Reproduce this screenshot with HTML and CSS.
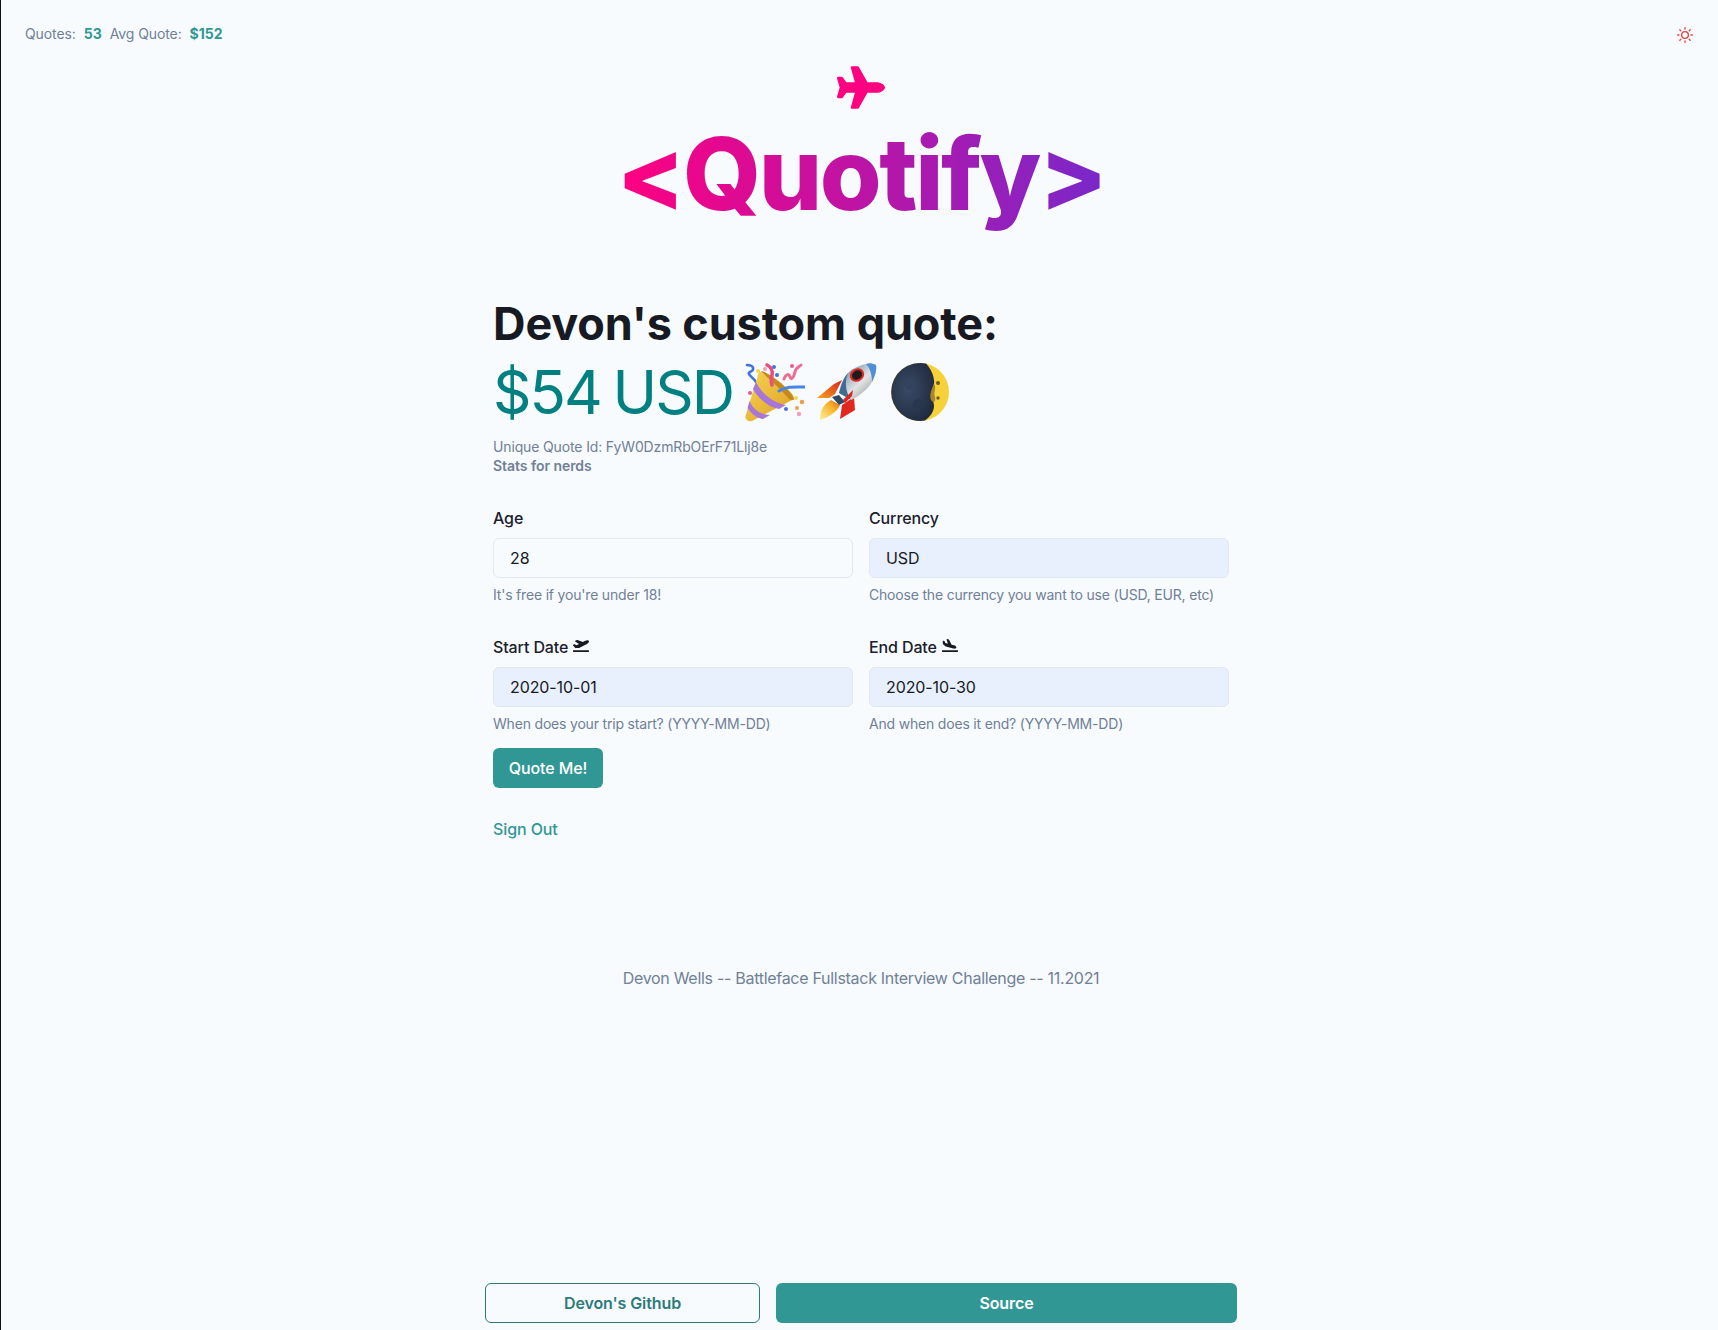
FILE: index.html
```html
<!DOCTYPE html>
<html lang="en">
<head>
  <meta charset="UTF-8">
  <meta name="viewport" content="width=device-width, initial-scale=1.0">
  <title>Quotify</title>
  <link rel="stylesheet" href="styles.css">
</head>
<body>
  <div class="page">
    <header class="topbar">
      <div class="stats">
        <span class="stat-label">Quotes:</span>
        <span class="stat-value">53</span>
        <span class="stat-label">Avg Quote:</span>
        <span class="stat-value">$152</span>
      </div>
      <svg class="sun" viewBox="0 0 24 24" fill="none" stroke="currentColor" stroke-width="2" stroke-linecap="round" stroke-linejoin="round">
        <circle cx="12" cy="12" r="5"></circle>
        <path d="M12 1v2M12 21v2M4.22 4.22l1.42 1.42M18.36 18.36l1.42 1.42M1 12h2M21 12h2M4.22 19.78l1.42-1.42M18.36 5.64l1.42-1.42"></path>
      </svg>
    </header>

    <div class="brand">
      <svg class="plane" viewBox="0 0 576 512" fill="currentColor">
        <path d="M480 192H365.71L260.61 8.06A16.014 16.014 0 0 0 246.71 0h-65.5c-10.63 0-18.3 10.17-15.38 20.39L214.86 192H112l-43.2-57.6c-3.02-4.03-7.77-6.4-12.8-6.4H16.01C5.6 128-2.04 137.78.49 147.88L32 256 .49 364.12C-2.04 374.22 5.6 384 16.01 384H56c5.04 0 9.78-2.37 12.8-6.4L112 320h102.86l-49.03 171.6c-2.92 10.22 4.75 20.4 15.38 20.4h65.5c5.74 0 11.04-3.08 13.89-8.06L365.71 320H480c35.35 0 96-28.65 96-64s-60.65-64-96-64z"></path>
      </svg>
      <h1 class="logo">&lt;Quotify&gt;</h1>
    </div>

    <main class="content">
      <h2 class="quote-title">Devon's custom quote:</h2>
      <div class="quote-price">
        <span class="price-text">$54 USD</span>
        <!-- party popper -->
        <svg class="emoji" viewBox="0 0 60 60">
          <defs>
            <linearGradient id="cone" x1="0" y1="0" x2="1" y2="1">
              <stop offset="0" stop-color="#f8d452"></stop>
              <stop offset="1" stop-color="#dba024"></stop>
            </linearGradient>
          </defs>
          <path d="M2 3 C9 3 10 8 5 10 C1 12 8 15 11 20" fill="none" stroke="#3f74e0" stroke-width="2.6" stroke-linecap="round"></path>
          <path d="M0.5 54 L14 10 C22 8 50 30 49 37 L7 59 C3 60 0 58 0.5 54 Z" fill="url(#cone)"></path>
          <path d="M16 9 C24 10 47 29 49 37 C48 39 45 38 44 37 C38 29 24 18 16 9 Z" fill="#c58a1e"></path>
          <path d="M11 20 C17 32 28 41 41 43 L34 47 C23 45 13 36 8 27 Z" fill="#a875d8"></path>
          <path d="M4.500 39 C8 47 15 53 25 53 L18 57 C11 56 6 51 2.500 46 Z" fill="#a875d8"></path>
          <path d="M22 3 C26 5 28 9 27 13 C26 17 26 20 27 23" fill="none" stroke="#ea4f7f" stroke-width="3.600" stroke-linecap="round"></path>
          <path d="M39 17 C41 12 44 11 45 15 C46 19 49 15 50 10 C51 5 54 5 56 3" fill="none" stroke="#ef6c94" stroke-width="3" stroke-linecap="round"></path>
          <path d="M34 29 C42 24 50 25 60 25" fill="none" stroke="#4a84e4" stroke-width="3" stroke-linecap="round"></path>
          <circle cx="13" cy="9" r="2" fill="#f0d84a"></circle>
          <circle cx="20" cy="7" r="2" fill="#ef9fbd"></circle>
          <circle cx="29" cy="5" r="2" fill="#3f74e0"></circle>
          <circle cx="32" cy="13" r="2" fill="#3f74e0"></circle>
          <circle cx="47" cy="4" r="2" fill="#e45d8f"></circle>
          <circle cx="5" cy="31" r="2" fill="#e45d8f"></circle>
          <circle cx="51" cy="36" r="2" fill="#f0d84a"></circle>
          <circle cx="57" cy="40" r="2.300" fill="#e9a24a"></circle>
          <circle cx="41" cy="47" r="2" fill="#3f74e0"></circle>
          <circle cx="52" cy="46" r="2" fill="#e9a24a"></circle>
          <circle cx="54" cy="52" r="2.200" fill="#f09fc0"></circle>
        </svg>
        <!-- rocket -->
        <svg class="emoji" viewBox="0 0 60 60">
          <defs>
            <linearGradient id="hull" x1="0" y1="0" x2="1" y2="1">
              <stop offset="0" stop-color="#4d7196"></stop>
              <stop offset="0.55" stop-color="#e2e4e4"></stop>
              <stop offset="1" stop-color="#7d8284"></stop>
            </linearGradient>
            <linearGradient id="flame" x1="0" y1="1" x2="1" y2="0">
              <stop offset="0" stop-color="#fdeea0"></stop>
              <stop offset="0.6" stop-color="#f7b52a"></stop>
              <stop offset="1" stop-color="#e8621c"></stop>
            </linearGradient>
            <linearGradient id="fin" x1="0" y1="1" x2="1" y2="0">
              <stop offset="0" stop-color="#f6a41f"></stop>
              <stop offset="1" stop-color="#d8201c"></stop>
            </linearGradient>
          </defs>
          <path d="M0 36 L17 22 L25 18 L18 32 L12 36 Z" fill="url(#fin)"></path>
          <path d="M23 57 L25 43 L37 35 L38 48 Z" fill="#e0281e"></path>
          <path d="M3 58 C3 50 5 43 14 38 L23 43 C20 50 12 55 3 58 Z" fill="url(#flame)"></path>
          <path d="M15 35 L22 33 L28 40 L22 43 Z" fill="#2f4a62"></path>
          <path d="M59 3 C52 0 42 3 33 9 C26 15 23 24 22 31 L34 38 C42 34 50 28 55 20 C58 14 60 8 59 3 Z" fill="url(#hull)"></path>
          <path d="M59 3 C55 1 52 1 49 2 C53 6 55 13 55 20 C58 14 60 8 59 3 Z" fill="#4f8fd4"></path>
          <path d="M22 31 C24 24 26 17 31 11 C27 20 29 31 34 38 Z" fill="#3f6a94"></path>
          <path d="M26 38 L36 28 L35 34 L28 41 Z" fill="#d8281e"></path>
          <ellipse cx="40" cy="13" rx="7.500" ry="6.500" transform="rotate(-35 40 13)" fill="#e0281e"></ellipse>
          <ellipse cx="40" cy="13" rx="5.300" ry="4.400" transform="rotate(-35 40 13)" fill="#1b1b20"></ellipse>
        </svg>
        <!-- moon -->
        <svg class="emoji moon" viewBox="0 0 60 60">
          <defs>
            <radialGradient id="moon-dark" cx="0.4" cy="0.45" r="0.65">
              <stop offset="0" stop-color="#3a4a66"></stop>
              <stop offset="1" stop-color="#1f2a3e"></stop>
            </radialGradient>
          </defs>
          <circle cx="30" cy="30" r="29" fill="#f7d138"></circle>
          <path d="M36 1.600 A29 29 0 1 0 35 58.600 C41 54 44 49 44 44 C44 38 40 35 41 31 C42 26 45 23 44 18 C43 11 40 6 36 1.600 Z" fill="url(#moon-dark)"></path>
          <path d="M44 22 C47 26 43 30 45 35 C46 39 44 42 41 38 C39 33 42 27 44 22 Z" fill="#a8862c"></path>
          <circle cx="48" cy="21" r="2" fill="#6d5a22"></circle>
          <circle cx="48" cy="36" r="1.700" fill="#6d5a22"></circle>
          <circle cx="20" cy="22" r="6" fill="#34435d"></circle>
          <circle cx="28" cy="42" r="5" fill="#293650"></circle>
        </svg>
      </div>
      <p class="meta">Unique Quote Id: FyW0DzmRbOErF71Llj8e</p>
      <p class="meta meta-strong">Stats for nerds</p>

      <form class="quote-form">
        <div class="field">
          <label class="field-label" for="age">Age</label>
          <input class="field-input" id="age" type="text" value="28">
          <p class="field-help">It's free if you're under 18!</p>
        </div>
        <div class="field">
          <label class="field-label" for="currency">Currency</label>
          <input class="field-input is-filled" id="currency" type="text" value="USD">
          <p class="field-help">Choose the currency you want to use (USD, EUR, etc)</p>
        </div>
        <div class="field">
          <label class="field-label" for="start">Start Date
            <svg class="label-icon" viewBox="0 0 640 512" fill="currentColor"><path d="M624 448H16c-8.84 0-16 7.16-16 16v32c0 8.84 7.16 16 16 16h608c8.84 0 16-7.16 16-16v-32c0-8.84-7.16-16-16-16zM80.55 341.27c6.28 6.84 15.1 10.72 24.33 10.71l130.54-.18a65.62 65.62 0 0 0 29.64-7.12l290.96-147.65c26.74-13.57 50.71-32.94 67.02-58.31 18.31-28.48 20.3-49.09 13.07-63.65-7.21-14.57-24.74-25.27-58.25-27.45-29.85-1.94-59.54 5.92-86.28 19.48l-98.51 49.99-218.7-82.06a17.799 17.799 0 0 0-18-1.11L90.62 67.29c-10.67 5.41-13.25 19.65-5.17 28.53l156.22 98.1-103.21 52.38-72.35-36.47a17.804 17.804 0 0 0-16.07.02L9.91 230.22c-10.44 5.3-13.19 19.12-5.57 28.08l76.21 82.97z"></path></svg>
          </label>
          <input class="field-input is-filled" id="start" type="text" value="2020-10-01">
          <p class="field-help">When does your trip start? (YYYY-MM-DD)</p>
        </div>
        <div class="field">
          <label class="field-label" for="end">End Date
            <svg class="label-icon" viewBox="0 0 640 512" fill="currentColor"><path d="M624 448H16c-8.84 0-16 7.16-16 16v32c0 8.84 7.16 16 16 16h608c8.84 0 16-7.16 16-16v-32c0-8.84-7.16-16-16-16zM44.81 205.66l88.74 80a62.607 62.607 0 0 0 25.47 13.93l287.6 78.35c26.49 7.22 54.62 8.72 81 1.36 29.58-8.24 43.39-21.13 47.31-35.79 3.91-14.66-1.65-32.74-23.28-54.66-19.32-19.57-44.65-31.95-71.14-39.17l-97.51-26.56L282.8 30.22c-1.51-5.81-5.95-10.35-11.65-11.91L206.05.58c-10.56-2.88-20.9 5.32-20.71 16.44l47.92 164.21-102.2-27.84-27.59-67.88c-1.93-4.89-6.01-8.57-11.02-9.93L52.72 64.75c-10.34-2.82-20.53 5-20.72 15.88l.23 101.78c.19 8.91 6.03 17.34 12.58 23.25z"></path></svg>
          </label>
          <input class="field-input is-filled" id="end" type="text" value="2020-10-30">
          <p class="field-help">And when does it end? (YYYY-MM-DD)</p>
        </div>
      </form>
      <button class="btn btn-solid quote-btn" type="button">Quote Me!</button>
      <a class="sign-out" href="#">Sign Out</a>
    </main>

    <p class="credit">Devon Wells -- Battleface Fullstack Interview Challenge -- 11.2021</p>

    <footer class="footer">
      <a class="btn btn-outline github" href="#">Devon's Github</a>
      <a class="btn btn-solid source" href="#">Source</a>
    </footer>
  </div>
</body>
</html>
```

FILE: styles.css
```css
* {
  box-sizing: border-box;
}
body {
  margin: 0;
  font-family: Inter, "Liberation Sans", sans-serif;
  background: #f7fbfe;
  color: #171923;
}
p, h1, h2 {
  margin: 0;
}
.page {
  min-height: 1330px;
  display: flex;
  flex-direction: column;
  align-items: center;
  border-left: 1px solid #111;
}
.topbar {
  align-self: stretch;
  height: 66px;
  padding: 25px 24px 0 24px;
  display: flex;
  justify-content: space-between;
  align-items: flex-start;
}
.stats {
  display: flex;
  gap: 8px;
  font-size: 14px;
  line-height: 18px;
  letter-spacing: -0.1px;
}
.stat-label {
  color: #718096;
}
.stat-value {
  color: #319795;
  font-weight: 700;
  letter-spacing: 0;
}
.sun {
  width: 16px;
  height: 16px;
  margin-top: 2px;
  margin-right: 1px;
  color: #e53e3e;
}
.brand {
  margin-left: 3px;
  display: flex;
  flex-direction: column;
  align-items: center;
}
.plane {
  width: 48px;
  height: 43px;
  color: #ff0080;
}
.logo {
  font-size: 100px;
  line-height: 130px;
  letter-spacing: -2.4px;
  font-weight: 800;
  background: linear-gradient(to left, #7928ca, #ff0080);
  -webkit-background-clip: text;
  background-clip: text;
  color: transparent;
}
.content {
  width: 736px;
  margin-left: 3px;
  margin-top: 56px;
}
.quote-title {
  font-size: 45px;
  line-height: 58px;
  letter-spacing: -0.1px;
  font-weight: 700;
}
.quote-price {
  display: flex;
  align-items: center;
  gap: 12px;
  margin-top: 3px;
  height: 72px;
  font-size: 60px;
  letter-spacing: -2px;
  word-spacing: -3px;
  color: #008080;
}
.emoji {
  width: 60px;
  height: 60px;
}
.moon {
  margin-left: 1px;
}
.meta {
  font-size: 14px;
  line-height: 19px;
  letter-spacing: -0.14px;
  color: #718096;
}
.quote-price + .meta {
  margin-top: 9px;
}
.meta-strong {
  font-weight: 600;
  letter-spacing: -0.05px;
}
.quote-form {
  margin-top: 31px;
  display: grid;
  grid-template-columns: 1fr 1fr;
  column-gap: 16px;
  row-gap: 30px;
}
.field-label {
  display: flex;
  align-items: center;
  gap: 5px;
  font-size: 16px;
  line-height: 24px;
  letter-spacing: -0.12px;
  font-weight: 450;
  margin-bottom: 8px;
  color: #1a202c;
}
.label-icon {
  width: 16px;
  height: 13px;
  margin-top: -4px;
  color: #171923;
}
.field-input {
  display: block;
  width: 100%;
  height: 40px;
  padding: 0 16px;
  font: inherit;
  font-size: 16px;
  letter-spacing: -0.1px;
  color: #171923;
  background: transparent;
  border: 1px solid #e2e8f0;
  border-radius: 6px;
}
.field-input.is-filled {
  background: #e8f0fe;
}
.field-help {
  margin-top: 7px;
  font-size: 14px;
  line-height: 20px;
  letter-spacing: -0.19px;
  color: #718096;
}
.btn {
  display: flex;
  align-items: center;
  justify-content: center;
  height: 40px;
  font-family: inherit;
  font-size: 16px;
  font-weight: 600;
  letter-spacing: -0.1px;
  border-radius: 6px;
  text-decoration: none;
}
.btn-solid {
  background: #319795;
  color: #fff;
  border: none;
}
.btn-outline {
  color: #2c7a7b;
  border: 1px solid #2c7a7b;
}
.quote-btn {
  margin-top: 14px;
  width: 110px;
  font-weight: 500;
}
.sign-out {
  display: block;
  margin-top: 29px;
  font-size: 16px;
  line-height: 24px;
  font-weight: 500;
  letter-spacing: -0.1px;
  color: #319795;
  text-decoration: none;
}
.credit {
  margin-top: 125px;
  margin-left: 3px;
  font-size: 16px;
  line-height: 24px;
  letter-spacing: -0.29px;
  color: #718096;
}
.footer {
  margin-top: auto;
  margin-bottom: 7px;
  margin-left: 3px;
  width: 752px;
  display: flex;
  gap: 16px;
}
.github {
  width: 275px;
}
.source {
  flex: 1;
}
```
